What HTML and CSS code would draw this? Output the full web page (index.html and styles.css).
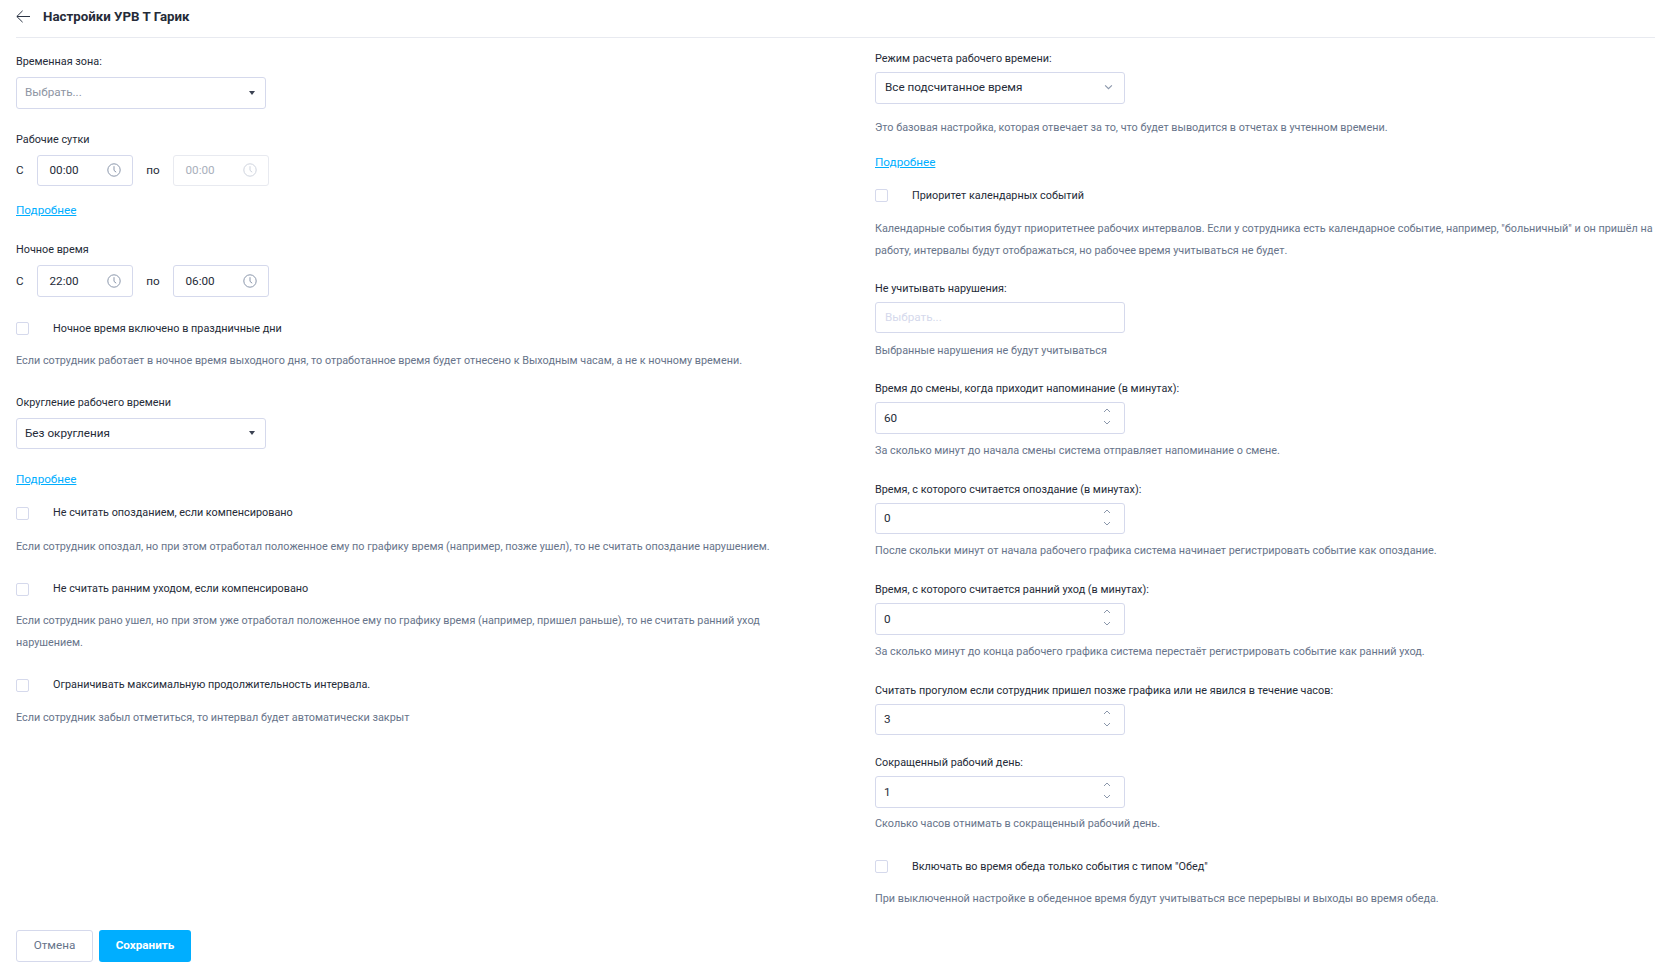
FILE: index.html
```html
<!DOCTYPE html>
<html lang="ru">
<head>
  <meta charset="UTF-8">
  <meta name="viewport" content="width=device-width, initial-scale=1.0">
  <title>Настройки УРВ</title>
  <link rel="stylesheet" href="styles.css">
</head>
<body>

  <!-- Иконки -->
  <svg class="sprite">
    <symbol id="icon-clock" viewBox="0 0 14 14">
      <circle cx="7" cy="7" r="6.2" fill="none" stroke="currentColor" stroke-width="1"/>
      <path d="M7 3.2V7.4L9.2 9.2" fill="none" stroke="currentColor" stroke-width="1"/>
    </symbol>
    <symbol id="icon-up" viewBox="0 0 8 5">
      <path d="M1 4L4 1L7 4" fill="none" stroke="currentColor" stroke-width="1"/>
    </symbol>
    <symbol id="icon-down" viewBox="0 0 8 5">
      <path d="M1 1L4 4L7 1" fill="none" stroke="currentColor" stroke-width="1"/>
    </symbol>
  </svg>

  <div class="page">
    <!-- Header -->
    <div class="header">
      <svg class="back" viewBox="0 0 14 13" width="14" height="13">
        <path d="M14 6.5H1M6.6 .8L.8 6.5L6.6 12.2" fill="none" stroke="#2b3444" stroke-width="1"/>
      </svg>
      <h1>Настройки УРВ Т Гарик</h1>
    </div>

    <div class="columns">
      <!-- Левая колонка -->
      <div class="column column-left">
        <div class="label">Временная зона:</div>
        <div class="control select"><span class="placeholder">Выбрать...</span><span class="caret"></span></div>

        <div class="label gap-23">Рабочие сутки</div>
        <div class="time-row">
          <span class="time-from">С</span>
          <div class="control time"><span>00:00</span><svg class="clock"><use href="#icon-clock"/></svg></div>
          <span class="time-to">по</span>
          <div class="control time disabled"><span>00:00</span><svg class="clock"><use href="#icon-clock"/></svg></div>
        </div>

        <a class="more gap-16" href="#">Подробнее</a>

        <div class="label gap-24">Ночное время</div>
        <div class="time-row">
          <span class="time-from">С</span>
          <div class="control time"><span>22:00</span><svg class="clock"><use href="#icon-clock"/></svg></div>
          <span class="time-to">по</span>
          <div class="control time"><span>06:00</span><svg class="clock"><use href="#icon-clock"/></svg></div>
        </div>

        <div class="check gap-24"><span class="box"></span>Ночное время включено в праздничные дни</div>
        <p class="hint gap-13">Если сотрудник работает в ночное время выходного дня, то отработанное время будет отнесено к Выходным часам, а не к ночному времени.</p>

        <div class="label gap-23">Округление рабочего времени</div>
        <div class="control select"><span>Без округления</span><span class="caret"></span></div>

        <a class="more gap-22" href="#">Подробнее</a>

        <div class="check gap-18"><span class="box"></span>Не считать опозданием, если компенсировано</div>
        <p class="hint gap-15">Если сотрудник опоздал, но при этом отработал положенное ему по графику время (например, позже ушел), то не считать опоздание нарушением.</p>

        <div class="check gap-23"><span class="box"></span>Не считать ранним уходом, если компенсировано</div>
        <p class="hint gap-13">Если сотрудник рано ушел, но при этом уже отработал положенное ему по графику время (например, пришел раньше), то не считать ранний уход нарушением.</p>

        <div class="check gap-23"><span class="box"></span>Ограничивать максимальную продолжительность интервала.</div>
        <p class="hint gap-14">Если сотрудник забыл отметиться, то интервал будет автоматически закрыт</p>

        <div class="actions">
          <button class="btn btn-cancel">Отмена</button>
          <button class="btn btn-save">Сохранить</button>
        </div>
      </div>

      <!-- Правая колонка -->
      <div class="column column-right">
        <div class="label">Режим расчета рабочего времени:</div>
        <div class="control select select-wide"><span>Все подсчитанное время</span><svg class="chevron"><use href="#icon-down"/></svg></div>
        <p class="hint gap-13">Это базовая настройка, которая отвечает за то, что будет выводится в отчетах в учтенном времени.</p>

        <a class="more gap-15" href="#">Подробнее</a>

        <div class="check gap-18"><span class="box"></span>Приоритет календарных событий</div>
        <p class="hint gap-14">Календарные события будут приоритетнее рабочих интервалов. Если у сотрудника есть календарное событие, например, "больничный" и он пришёл на работу, интервалы будут отображаться, но рабочее время учитываться не будет.</p>

        <div class="label gap-19">Не учитывать нарушения:</div>
        <div class="control"><span class="placeholder-light">Выбрать...</span></div>
        <p class="hint gap-7">Выбранные нарушения не будут учитываться</p>

        <div class="label gap-19">Время до смены, когда приходит напоминание (в минутах):</div>
        <div class="control number"><span>60</span><div class="spin"><svg><use href="#icon-up"/></svg><svg><use href="#icon-down"/></svg></div></div>
        <p class="hint gap-6">За сколько минут до начала смены система отправляет напоминание о смене.</p>

        <div class="label gap-20">Время, с которого считается опоздание (в минутах):</div>
        <div class="control number"><span>0</span><div class="spin"><svg><use href="#icon-up"/></svg><svg><use href="#icon-down"/></svg></div></div>
        <p class="hint gap-6">После скольки минут от начала рабочего графика система начинает регистрировать событие как опоздание.</p>

        <div class="label gap-20">Время, с которого считается ранний уход (в минутах):</div>
        <div class="control number"><span>0</span><div class="spin"><svg><use href="#icon-up"/></svg><svg><use href="#icon-down"/></svg></div></div>
        <p class="hint gap-6">За сколько минут до конца рабочего графика система перестаёт регистрировать событие как ранний уход.</p>

        <div class="label gap-20">Считать прогулом если сотрудник пришел позже графика или не явился в течение часов:</div>
        <div class="control number"><span>3</span><div class="spin"><svg><use href="#icon-up"/></svg><svg><use href="#icon-down"/></svg></div></div>

        <div class="label gap-20">Сокращенный рабочий день:</div>
        <div class="control number"><span>1</span><div class="spin"><svg><use href="#icon-up"/></svg><svg><use href="#icon-down"/></svg></div></div>
        <p class="hint gap-5">Сколько часов отнимать в сокращенный рабочий день.</p>

        <div class="check gap-24"><span class="box"></span>Включать во время обеда только события с типом "Обед"</div>
        <p class="hint gap-13">При выключенной настройке в обеденное время будут учитываться все перерывы и выходы во время обеда.</p>
      </div>
    </div>
  </div>

</body>
</html>
```

FILE: styles.css
```css
* {
  margin: 0;
  padding: 0;
  box-sizing: border-box;
}

body {
  font-family: 'Roboto', sans-serif;
  font-size: 10.83px;
  line-height: 16px;
  color: #252b38;
  background-color: #fff;
}

.sprite {
  display: none;
}

.page {
  display: flex;
  flex-direction: column;
  height: 964px;
  padding: 0 16px 2px;
}

/* Header */
.header {
  display: flex;
  align-items: center;
  gap: 13px;
  height: 38px;
  padding-bottom: 4px;
  border-bottom: 1px solid #e8eaf0;
}

.header h1 {
  font-size: 13.3px;
  font-weight: 700;
  line-height: 18px;
  color: #252b38;
}

.back {
  margin-top: -1px;
}

/* Колонки */
.columns {
  flex: 1;
  display: grid;
  grid-template-columns: 1fr 1fr;
  column-gap: 79px;
}

.column {
  display: flex;
  flex-direction: column;
  align-items: flex-start;
}

.column-left {
  padding-top: 16px;
}

.column-right {
  padding-top: 13px;
}

/* Отступы между блоками */
.gap-5 { margin-top: 5px; }
.gap-6 { margin-top: 6px; }
.gap-7 { margin-top: 7px; }
.gap-13 { margin-top: 13px; }
.gap-14 { margin-top: 14px; }
.gap-15 { margin-top: 15px; }
.gap-16 { margin-top: 16px; }
.gap-18 { margin-top: 18px; }
.gap-19 { margin-top: 19px; }
.gap-20 { margin-top: 20px; }
.gap-22 { margin-top: 22px; }
.gap-23 { margin-top: 23px; }
.gap-24 { margin-top: 24px; }

.label {
  margin-bottom: 7px;
}

.column-right .label {
  margin-bottom: 5px;
}

/* Поля */
.control {
  display: flex;
  align-items: center;
  justify-content: space-between;
  width: 250px;
  height: 31.5px;
  padding: 0 9px;
  border: 1px solid #d5d9ec;
  border-radius: 3px;
  background-color: #fff;
  font-size: 11.7px;
}

.select {
  padding-left: 8px;
}

.select-wide {
  padding: 0 9px 1px;
}

.placeholder {
  margin-bottom: 2px;
  color: #8e95a3;
}

.placeholder-light {
  color: #d5d9ec;
}

.caret {
  width: 0;
  height: 0;
  margin-right: 1px;
  border-left: 3.5px solid transparent;
  border-right: 3.5px solid transparent;
  border-top: 4px solid #3b4252;
}

.chevron {
  width: 9px;
  height: 6px;
  margin-right: 2px;
  color: #8b97ab;
}

.time-row {
  display: flex;
  align-items: center;
}

.time-from {
  width: 21px;
  font-size: 11.7px;
}

.time-to {
  width: 40px;
  text-align: center;
  font-size: 11.7px;
}

.control.time {
  width: 96px;
  padding: 0 11px 0 11.5px;
}

.clock {
  width: 14px;
  height: 14px;
  color: #8b97ab;
}

.control.disabled {
  border-color: #e8eaf0;
  color: #a9afbb;
}

.control.disabled .clock {
  color: #cfd4de;
}

.number {
  padding: 0 13px 0 8px;
}

.spin {
  display: flex;
  flex-direction: column;
  gap: 7px;
  margin-bottom: 2px;
}

.spin svg {
  display: block;
  width: 8px;
  height: 5px;
  color: #8b97ab;
}

/* Ссылка */
.more {
  font-size: 11.7px;
  color: #00aeff;
  text-decoration: underline;
}

/* Чекбокс */
.check {
  display: flex;
  align-items: center;
}

.box {
  width: 13px;
  height: 13px;
  margin-right: 24px;
  border: 1px solid #d5d9ec;
  border-radius: 2px;
}

.hint {
  line-height: 22px;
  color: #67748a;
}

/* Кнопки */
.actions {
  display: flex;
  gap: 6px;
  margin-top: auto;
}

.btn {
  height: 32px;
  padding-bottom: 2px;
  border-radius: 3px;
  font-family: 'Roboto', sans-serif;
  font-size: 11.7px;
}

.btn-cancel {
  width: 77px;
  border: 1px solid #d5d9ec;
  background-color: #fff;
  color: #67748a;
}

.btn-save {
  width: 92px;
  border: none;
  background-color: #00aeff;
  color: #fff;
  font-weight: 700;
}
```
